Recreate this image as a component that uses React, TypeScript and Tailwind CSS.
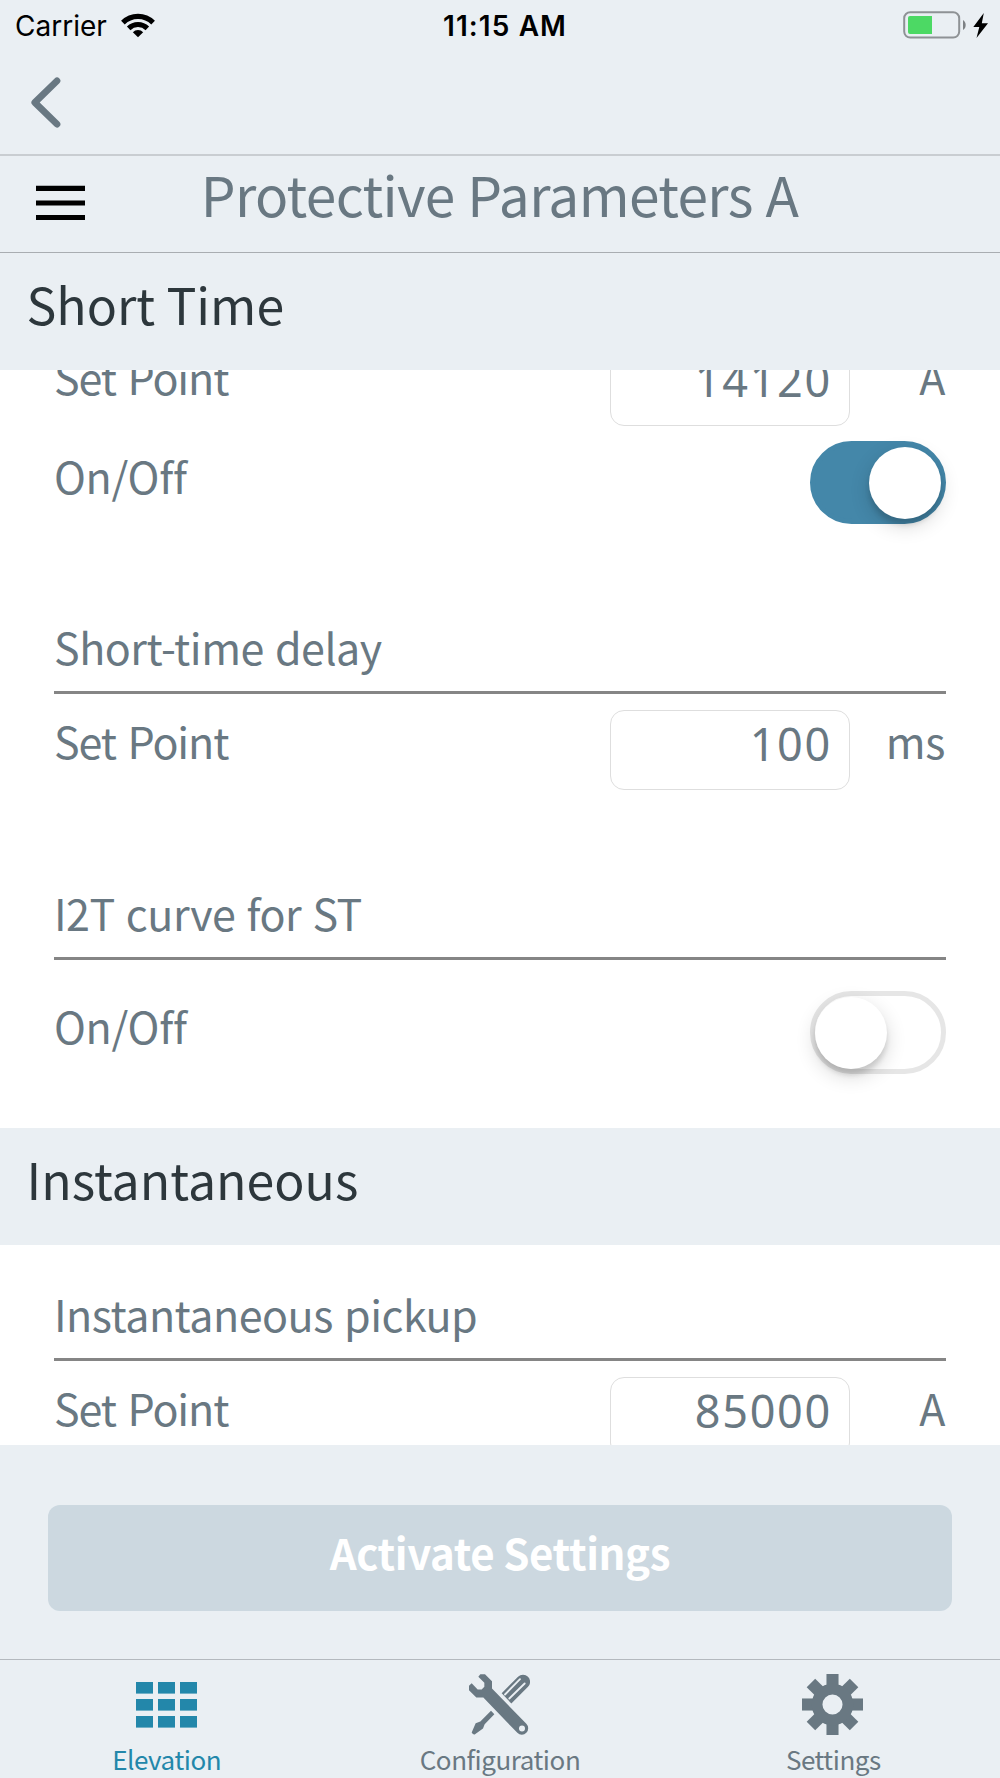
import { useState, type ReactNode } from 'react'

function WifiIcon() {
  return (
    <svg width="34" height="25" viewBox="0 0 102 75" fill="none" stroke="black">
      <path d="M5.7 28.7a64 64 0 0 1 90.6 0" strokeWidth="15.5" />
      <path d="M23 46.2a40 40 0 0 1 56 0" strokeWidth="15" />
      <path d="M51 73 35.5 57.5a22 22 0 0 1 31 0z" fill="black" stroke="none" />
    </svg>
  )
}

function BatteryIcon() {
  return (
    <svg width="86" height="28" viewBox="0 0 86 28">
      <rect x="1.2" y="1.2" width="55" height="25.4" rx="6" fill="none" stroke="#8e9295" strokeWidth="2" />
      <path d="M7 5h22v18H7a2 2 0 0 1-2-2V7a2 2 0 0 1 2-2z" fill="#4cd964" />
      <path d="M60 9c3.600 2 3.600 8 0 10z" fill="#7d8184" />
      <path d="M80.800 2 70.300 16h6L73.500 27 85 12.300h-6.200z" fill="black" />
    </svg>
  )
}

function GridIcon() {
  return (
    <svg width="61" height="46" viewBox="0 0 61 46" fill="currentColor" className="mt-px">
      {[0, 17, 34].map((y) =>
        [0, 22, 44].map((x) => <rect key={`${x}-${y}`} x={x} y={y} width="17" height="11.600" />)
      )}
    </svg>
  )
}

function ToolsIcon() {
  return (
    <svg width="61" height="61" viewBox="0 0 183 182" fill="currentColor">
      {/* wrench */}
      <path
        fillRule="evenodd"
        d="M28 8 34 0h14l21 21v22l103 106a18 18 0 0 1-27 27L43 70H22L0 48V35l8-8 18 19h12l8-8V26zM159 154a9 9 0 1 0 0 18 9 9 0 0 0 0-18z"
      />
      {/* screwdriver */}
      <path d="M98 57 147 8a21 21 0 0 1 30 30L127 88z" />
      <path d="M108 61 153 15M121 73 167 28" stroke="#eaeff3" strokeWidth="5.500" strokeLinecap="round" fill="none" />
      <path d="M66 110 76 120 47 150 42 163 17 181q-5 1-9-6L20 147 34 142z" />
    </svg>
  )
}

function GearIcon() {
  return (
    <svg width="61" height="61" viewBox="0 0 182 182" fill="currentColor" className="mr-px">
      {[0, 45, 90, 135].map((angle) => (
        <g key={angle} transform={`rotate(${angle} 91 91)`}>
          <rect x="73" y="0" width="36" height="45" />
          <rect x="73" y="137" width="36" height="45" />
        </g>
      ))}
      <circle cx="91" cy="91" r="46" fill="none" stroke="currentColor" strokeWidth="32" />
    </svg>
  )
}

function Switch({ defaultOn = false }: { defaultOn?: boolean }) {
  const [on, setOn] = useState(defaultOn)
  return (
    <button
      role="switch"
      aria-checked={on}
      aria-label="On/Off"
      onClick={() => setOn(!on)}
      className={`mr-[0.5px] flex h-[83px] w-[136px] items-center rounded-full border-5 ${
        on ? 'justify-end border-[#4487a9] bg-[#4487a9]' : 'justify-start border-[#e6e6e6] bg-white'
      }`}
    >
      <span className="size-[72px] shrink-0 rounded-full bg-white shadow-[0_7px_20px_rgba(0,0,0,0.16),0_6px_5px_rgba(0,0,0,0.12)]" />
    </button>
  )
}

function SectionHeader({ children }: { children: ReactNode }) {
  return (
    <h2 className="h-[117px] shrink-0 bg-[#eaeff3] pl-[26.5px] text-[50px] leading-[101px] text-[#2d373c]">
      {children}
    </h2>
  )
}

function GroupTitle({ children }: { children: ReactNode }) {
  return (
    <h3 className="h-[74px] border-b-3 border-[#858585] text-[43px] leading-[52px] tracking-[-0.5px] [word-spacing:2px]">
      {children}
    </h3>
  )
}

function SetPoint({ value, unit }: { value: string; unit: string }) {
  return (
    <div className="flex h-20 leading-[60px]">
      <span className="flex-1 tracking-[-1.1px] [word-spacing:3px]">Set Point</span>
      <input
        defaultValue={value}
        aria-label="Set Point"
        className="h-20 w-[240px] rounded-[14px] border border-[#dedede] bg-white pr-[17px] pb-3.5 text-right font-['Noto_Sans',sans-serif] text-[45px] tracking-[1.7px]"
      />
      <span className="w-24 pr-px text-right tracking-[-0.4px]">{unit}</span>
    </div>
  )
}

function OnOff({ defaultOn }: { defaultOn?: boolean }) {
  return (
    <div className="flex h-[83px] justify-between leading-[68px]">
      <span className="tracking-[-0.3px]">On/Off</span>
      <Switch defaultOn={defaultOn} />
    </div>
  )
}

function Tab({ icon, label, active }: { icon: ReactNode; label: string; active?: boolean }) {
  return (
    <a className={`flex flex-1 cursor-pointer flex-col items-center ${active ? 'text-[#2387aa]' : 'text-[#697882]'}`}>
      <span className="flex h-[92px] items-center pb-1">{icon}</span>
      <span className="-mt-[9px] text-[26px] leading-[32px] tracking-[-0.45px]">{label}</span>
    </a>
  )
}

export default function App() {
  return (
    <div className="flex h-[1778px] w-[1000px] flex-col overflow-hidden bg-[#eaeff3] font-['Noto_Sans_CJK_SC',sans-serif] text-[43px] text-[#697882]">
      {/* Status bar */}
      <div className="grid h-[50px] shrink-0 grid-cols-3 items-center pr-[11px] pl-[15px] font-['Inter',sans-serif] text-[28px] text-black">
        <div className="flex items-center gap-3.5">
          <span className="pt-0.5">Carrier</span>
          <WifiIcon />
        </div>
        <span className="pt-0.5 pl-1.5 text-center font-semibold tracking-[1.1px]">11:15 AM</span>
        <div className="flex justify-end">
          <BatteryIcon />
        </div>
      </div>

      {/* Navigation */}
      <div className="flex h-[106px] shrink-0 items-center border-b-2 border-[#c9cdd1] pl-[31px]">
        <svg width="30" height="51" viewBox="0 0 30 51" fill="none" stroke="#697882" strokeWidth="6.700" strokeLinecap="round" strokeLinejoin="round">
          <path d="M26 3.800 3.800 25.500 26 47.200" />
        </svg>
      </div>
      <div className="flex h-[97px] shrink-0 border-b border-[#a9adb1] px-9">
        <svg width="49" height="36" viewBox="0 0 49 36" className="mt-[29px]">
          <path d="M0 3.300h49M0 18h49M0 32.500h49" stroke="black" strokeWidth="5.200" />
        </svg>
        <h1 className="mr-[50px] flex-1 text-center text-[55px] leading-[75px] tracking-[-0.65px] [word-spacing:1px]">
          Protective Parameters A
        </h1>
      </div>
      <SectionHeader>Short Time</SectionHeader>

      {/* Scrolled parameter list */}
      <main className="h-[1075px] shrink-0 overflow-hidden bg-white">
        <div className="-mt-6 px-[54px]">
          <SetPoint value="14120" unit="A" />
          <div className="mt-[15px]">
            <OnOff defaultOn />
          </div>
          <div className="mt-24">
            <GroupTitle>Short-time delay</GroupTitle>
            <div className="mt-4">
              <SetPoint value="100" unit="ms" />
            </div>
          </div>
          <div className="mt-24">
            <GroupTitle>I2T curve for ST</GroupTitle>
            <div className="mt-[31px]">
              <OnOff />
            </div>
          </div>
        </div>
        <div className="mt-[54px]">
          <SectionHeader>Instantaneous</SectionHeader>
          <div className="px-[54px] pt-[42px]">
            <GroupTitle>Instantaneous pickup</GroupTitle>
            <div className="mt-4">
              <SetPoint value="85000" unit="A" />
            </div>
          </div>
        </div>
      </main>

      <div className="h-[214px] shrink-0 px-12 pt-[60px]">
        <button className="h-[106px] w-full rounded-xl bg-[#ccd8e0] pb-3.5 text-[42px] font-bold tracking-[-0.4px] text-white">
          Activate Settings
        </button>
      </div>

      {/* Tab bar */}
      <nav className="flex h-[119px] shrink-0 border-t border-[#b4b9be]">
        <Tab icon={<GridIcon />} label="Elevation" active />
        <Tab icon={<ToolsIcon />} label="Configuration" />
        <Tab icon={<GearIcon />} label="Settings" />
      </nav>
    </div>
  )
}
